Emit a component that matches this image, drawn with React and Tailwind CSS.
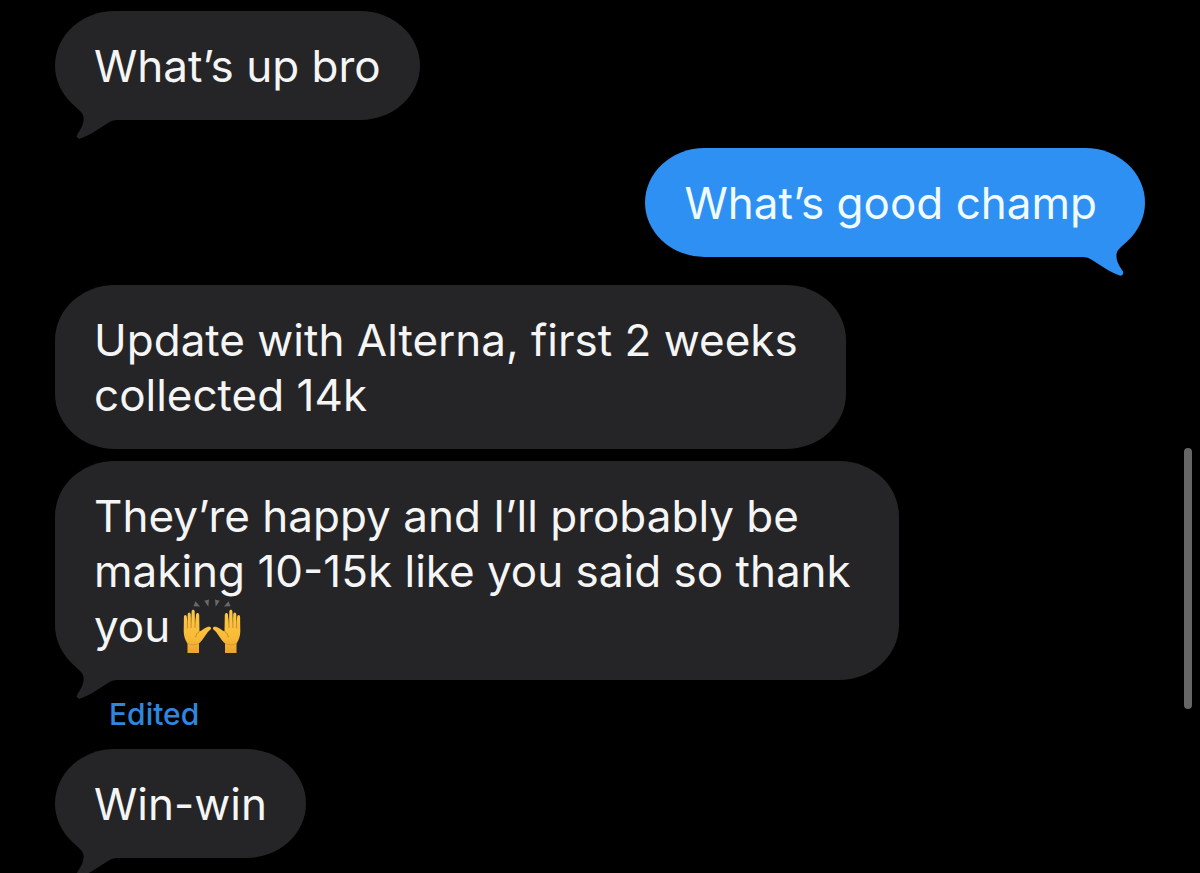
import { clsx } from 'clsx'

const messages = [
  { id: 1, text: 'What’s up bro', tail: true },
  { id: 2, text: 'What’s good champ', mine: true, wide: true, tail: true },
  { id: 3, text: 'Update with Alterna, first 2 weeks\ncollected 14k', wide: true },
  {
    id: 4,
    text: 'They’re happy and I’ll probably be\nmaking 10-15k like you said so thank\nyou ',
    hands: true,
    wide: true,
    tail: true,
    edited: true,
  },
  { id: 5, text: 'Win-win', tail: true },
]

const Hand = () => (
  <g>
    <path
      d="M4.500 54V44.500C2 41 0.700 37 0.700 32L0.900 18C1 15.300 3.700 15.300 3.900 18L4.400 26L4.700 15.500C4.900 12.800 7.600 12.800 7.700 15.500L8.100 25L8.600 12.800C8.800 10.200 11.500 10.200 11.700 12.800L12 25L13 16C13.300 13.300 16.200 13.500 16.200 16.300L16.500 32.500C19 31.500 22 28.800 25 27.800C28 27 29 29.500 27 31C23 34 21 40 16 44.500V54Z"
      fill="url(#skin)"
    />
    <path
      d="M4.400 23V29M8.100 21V28.500M12.100 21V28.500M16.500 32.500C14.500 33.500 13 35.500 12.800 38"
      fill="none"
      stroke="#c98a28"
      strokeWidth="1"
      strokeLinecap="round"
    />
    <path d="M4.500 44.500C8 46 12.500 46 16 44.500" fill="none" stroke="#dd9a2c" strokeWidth="1" />
  </g>
)

const RaisedHands = () => (
  <svg role="img" aria-label="Raising hands" viewBox="0 0 60 54" className="inline-block w-[60px] h-[54px] align-[-11px]">
    <defs>
      <linearGradient id="skin" x1="0" y1="0" x2="0" y2="1">
        <stop offset="0" stopColor="#fdc945" />
        <stop offset="0.65" stopColor="#f8bb38" />
        <stop offset="1" stopColor="#e9a430" />
      </linearGradient>
    </defs>
    <path
      d="M12.500 2.300L17 7.500L10.500 7.200ZM21.300 1.800L26 0.500L25.300 7.800ZM32 0.500L36.700 1.800L32.700 7.800ZM45.500 2.300L47.500 7.200L41 7.500Z"
      fill="#68686b"
    />
    <Hand />
    <g transform="translate(58 0) scale(-1 1)">
      <Hand />
    </g>
  </svg>
)

const Tail = ({ mine }) => (
  <svg
    aria-hidden="true"
    viewBox="0 0 56 48"
    className={clsx(
      'absolute -bottom-[19px] w-14 h-12',
      mine ? 'right-3 -scale-x-100 text-[#2e90f2]' : 'left-3 text-[#252527]'
    )}
  >
    <path
      d="M3 9C6 13 9 16 12 19C14.500 21.300 16 23 16.500 26C17 31 15.500 36 11 42C9.500 44 9.500 45.500 10.300 46.600C11 47.800 12.500 48 14 47.300C19 45.500 24 43 28 40.300L41 32C44 30 46 29 52 29L54 8Z"
      fill="currentColor"
    />
  </svg>
)

const Message = ({ text, mine, wide, tail, hands, edited }) => (
  <li className={clsx('flex flex-col', mine ? 'items-end' : 'items-start', tail ? 'mb-7' : 'mb-3')}>
    <div
      className={clsx(
        'relative rounded-[60px/55px] pt-7 pb-[26px] pl-[39px] text-[44px] leading-[55px]',
        wide ? 'pr-12' : 'pr-[39px]',
        mine ? 'bg-[#2e90f2] text-[#effbff]' : 'bg-[#252527] text-[#f5f5f5]'
      )}
    >
      {tail && <Tail mine={mine} />}
      <p className="relative whitespace-pre-line">
        {text}
        {hands && <RaisedHands />}
      </p>
    </div>
    {edited && (
      <button type="button" className="ml-[54px] mt-4 -mb-[11px] text-[30px] leading-9 font-medium text-[#2f86dd]">
        Edited
      </button>
    )}
  </li>
)

const App = () => (
  <main className="relative h-screen overflow-hidden bg-black font-['Inter',sans-serif]">
    <ul className="px-[55px] pt-[11px]">
      {messages.map((message) => (
        <Message key={message.id} {...message} />
      ))}
    </ul>
    <div className="absolute right-2 top-[448px] h-[261px] w-2 rounded-full bg-[#666666]" />
  </main>
)

export default App
